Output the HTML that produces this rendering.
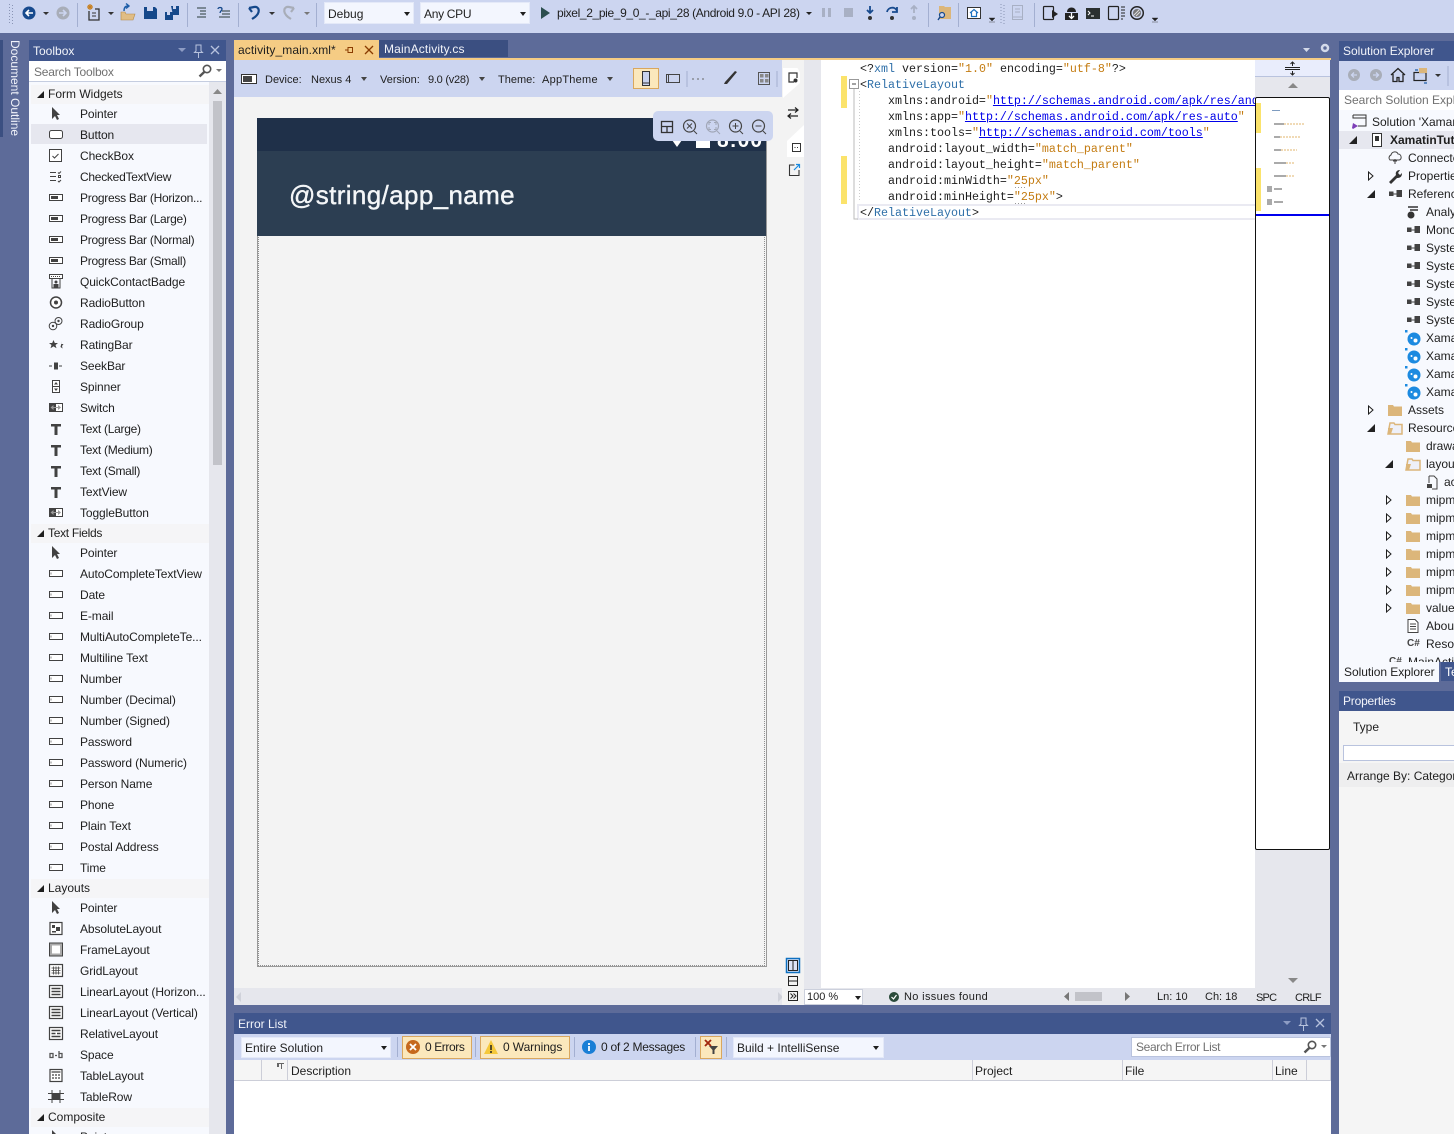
<!DOCTYPE html>
<html><head><meta charset="utf-8"><style>
html,body{margin:0;padding:0}
body{width:1454px;height:1134px;overflow:hidden;position:relative;background:#5d6b99;font:12px/16px "Liberation Sans",sans-serif;color:#1e1e1e}
div,span.a,svg.a{position:absolute}
.a{white-space:nowrap}
.w{color:#fff}
.tb{left:0;top:0;width:1454px;height:33px;background:#ccd5f0}
.sp{width:1px;height:24px;top:3px;background:#a3afd1}
.cb{background:#f3f6fe;border:1px solid #e4e9f8;height:22px;top:2px;line-height:22px;padding-left:3px;box-sizing:border-box}
.dd{width:0;height:0;border:3px solid transparent;border-top:4px solid #1e1e1e;border-bottom:0}
.hd{background:#40568d;color:#f2f4fa}
.x{position:relative;height:21px;line-height:21px;white-space:nowrap;padding-left:80px;margin-left:-29px;letter-spacing:-.1px}
.n2{letter-spacing:-.27px}
.c{position:relative;height:19px;line-height:19px;white-space:nowrap;padding-left:17px;background:#f5f5f7;margin:0 2px}
.c:before{content:"";position:absolute;left:6px;top:6px;width:0;height:0;border-left:7px solid transparent;border-bottom:7px solid #1e1e1e}
.x svg{position:absolute;left:48px;top:2px;width:16px;height:16px}
.t{left:1339px;width:115px;height:18px;line-height:18px;white-space:nowrap;overflow:hidden}
.t span{position:absolute;top:0}
.t svg{position:absolute;top:1px;width:16px;height:16px}
.code{font:11.67px/16px "Liberation Mono",monospace;white-space:pre;left:860px;color:#1e1e1e}
.s{color:#c47c12}.n{color:#2e6fa8}.l{color:#0000e8;text-decoration:underline}
.btn{background:#fbe8bc;border:1px solid #d9a75e;box-sizing:border-box;height:23px;top:1036px}
</style></head><body>
<svg width="0" height="0" style="position:absolute">
<symbol id="ptr" viewBox="0 0 16 16"><path d="M4 1v12l3-3 2 4 2-1-2-4h3z" fill="#424242"/></symbol>
<symbol id="btn" viewBox="0 0 16 16"><rect x="1.500" y="3.500" width="13" height="8" rx="2" fill="#fff" stroke="#424242"/></symbol>
<symbol id="chk" viewBox="0 0 16 16"><rect x="1.500" y="1.500" width="12" height="12" fill="#fff" stroke="#424242"/><path d="M4.500 8l2 2 4-4" fill="none" stroke="#424242"/></symbol>
<symbol id="ctv" viewBox="0 0 16 16"><path d="M2 3.500h6M2 7.500h6M2 11.500h6M10 3.500l1 1 2-2M10 12l1 1 2-2" fill="none" stroke="#424242"/><rect x="10.500" y="6.500" width="2" height="2" fill="none" stroke="#424242"/></symbol>
<symbol id="pb" viewBox="0 0 16 16"><rect x="1.500" y="4.500" width="13" height="6" fill="#fff" stroke="#424242"/><rect x="3" y="6" width="7" height="3" fill="#424242"/></symbol>
<symbol id="tf" viewBox="0 0 16 16"><rect x="1.500" y="4.500" width="13" height="6" fill="#fff" stroke="#424242"/><path d="M3 6.500v2" stroke="#888"/></symbol>
<symbol id="qcb" viewBox="0 0 16 16"><rect x="1.500" y="0.500" width="13" height="4" fill="#fff" stroke="#424242"/><path d="M3 2.500h1M5 2.500h1M7 2.500h1M9 2.500h1M11 2.500h1" stroke="#424242"/><path d="M4 5v9h8V5" fill="none" stroke="#424242"/><circle cx="8" cy="8" r="1.500" fill="#424242"/><rect x="5.500" y="10" width="5" height="3.500" fill="#424242"/></symbol>
<symbol id="rad" viewBox="0 0 16 16"><circle cx="8" cy="7.500" r="5.500" fill="#fff" stroke="#424242" stroke-width="1.500"/><circle cx="8" cy="7.500" r="2" fill="#424242"/></symbol>
<symbol id="rg" viewBox="0 0 16 16"><circle cx="10.500" cy="5" r="3.500" fill="none" stroke="#424242"/><circle cx="5" cy="10" r="3.800" fill="#f7f9fe" stroke="#424242"/><circle cx="5" cy="10" r="1.200" fill="#424242"/><circle cx="10.500" cy="5" r="1.200" fill="#424242"/></symbol>
<symbol id="rt" viewBox="0 0 16 16"><path d="M5.500 3l1.300 3H10L7.500 8l1 3.200L5.500 9.400 2.500 11.200 3.500 8 1 6h3.200zM14 4l-.6 3H15.500l-1.500 2 .6 2.500L12.500 10z" fill="#424242"/></symbol>
<symbol id="sk" viewBox="0 0 16 16"><path d="M1 8h3M11 8h3" stroke="#424242"/><rect x="6" y="4.500" width="4" height="7" fill="#424242"/></symbol>
<symbol id="spn" viewBox="0 0 16 16"><rect x="4.500" y="1.500" width="7" height="12" fill="#fff" stroke="#424242"/><path d="M4.500 7.500h7" stroke="#424242"/><path d="M8 3l2 2.500H6zM6 9.500h4L8 12z" fill="#424242"/></symbol>
<symbol id="sw" viewBox="0 0 16 16"><rect x="1" y="3" width="14" height="9" fill="#424242"/><rect x="8" y="4" width="6" height="7" fill="#fff"/><path d="M2.500 7.500L5.500 5v5zM13 7.500L10 5v5z" fill="#9a9a9a"/><path d="M5 7.500h6" stroke="#999"/></symbol>
<symbol id="T" viewBox="0 0 16 16"><path d="M3 3h10v2.500H9.500V14h-3V5.500H3z" fill="#424242"/></symbol>
<symbol id="abs" viewBox="0 0 16 16"><rect x="2" y="1.500" width="12" height="12" fill="#fff" stroke="#424242" stroke-width="1.200"/><rect x="4" y="4" width="3" height="3" fill="#424242"/><rect x="8" y="6" width="4" height="4" fill="#424242"/><rect x="4" y="10" width="4" height="1.500" fill="#424242"/></symbol>
<symbol id="fr" viewBox="0 0 16 16"><rect x="1.500" y="1" width="13" height="13" fill="#aaa" stroke="#424242"/><rect x="4" y="3.500" width="8" height="8" fill="#fff"/></symbol>
<symbol id="gr" viewBox="0 0 16 16"><rect x="1.500" y="1.500" width="13" height="12" fill="#fff" stroke="#424242" stroke-width="1.200"/><path d="M3.500 5h9M3.500 7.500h9M3.500 10h9M5.500 3.500v8M8 3.500v8M10.500 3.500v8" stroke="#424242" stroke-width=".8"/></symbol>
<symbol id="lin" viewBox="0 0 16 16"><rect x="1.500" y="1.500" width="13" height="12" fill="#fff" stroke="#424242" stroke-width="1.200"/><path d="M3.500 4.500h9M3.500 7.500h9M3.500 10.500h9" stroke="#424242" stroke-width="1.500"/></symbol>
<symbol id="rel" viewBox="0 0 16 16"><rect x="1.500" y="1.500" width="13" height="12" fill="#fff" stroke="#424242" stroke-width="1.200"/><path d="M3.500 4.500h9M3.500 7.500h4M9 7.500h3.500M3.500 10.500h9" stroke="#424242" stroke-width="1.500"/></symbol>
<symbol id="sp" viewBox="0 0 16 16"><path d="M2 6.500h3v4H2zM11 4v6.500h3v-4h-3M7 8.500h2" fill="none" stroke="#555" stroke-width="1.300"/></symbol>
<symbol id="tbl" viewBox="0 0 16 16"><rect x="2" y="1.500" width="12" height="12" fill="#fff" stroke="#424242" stroke-width="1.200"/><path d="M3.500 4h9M4 7h2M7 7h2M10 7h2M4 10h2M7 10h2M10 10h2" stroke="#424242" stroke-width="1.300"/></symbol>
<symbol id="tr" viewBox="0 0 16 16"><path d="M0 4.500h16M0 10.500h16M4 1v13M12 1v13" stroke="#424242"/><rect x="4" y="5" width="8" height="5" fill="#424242"/></symbol>
<symbol id="fld" viewBox="0 0 16 16"><path d="M1 3h5l1 1.500h8V14H1z" fill="#dcb67a"/></symbol>
<symbol id="fo" viewBox="0 0 16 16"><path d="M3 3h4l1 1.500h7V14H1z" fill="#eef0f8" stroke="#dcb67a" stroke-width="1.500"/><path d="M1 8h5l-2 6H1z" fill="#dcb67a"/></symbol>
<symbol id="refs" viewBox="0 0 16 16"><rect x="2" y="5.500" width="4.500" height="4.500" fill="#424242"/><rect x="9.500" y="4" width="5.500" height="7" fill="#424242"/><path d="M6.500 8h3" stroke="#424242"/></symbol>
<symbol id="xam" viewBox="0 0 16 16"><circle cx="9" cy="9" r="6.500" fill="#1c8ae0"/><circle cx="10.500" cy="10.500" r="2" fill="#fff"/><circle cx="6.500" cy="8" r="1" fill="#fff"/><rect x="0" y="0" width="2.500" height="2.500" fill="#1c8ae0"/></symbol>
<symbol id="arO" viewBox="0 0 8 10"><path d="M1.500 1v8l4.500-4z" fill="#fff" stroke="#1e1e1e"/></symbol>
<symbol id="mag" viewBox="0 0 16 16"><circle cx="10" cy="6" r="3.700" fill="none" stroke="#555" stroke-width="1.600"/><path d="M7.500 8.700L2.500 13.500" stroke="#555" stroke-width="2.400"/></symbol>
</svg>

<div class="tb"></div>
<svg class="a" style="left:0;top:0" width="330" height="33" viewBox="0 0 330 33">
<path d="M9.500 4v20M12.500 5v20" stroke="#8a95b5" stroke-dasharray="1 2"/>
<circle cx="29" cy="13" r="6.500" fill="#174a8e"/><path d="M33 13h-7M29 10l-3 3 3 3" stroke="#fff" stroke-width="1.600" fill="none"/>
<path d="M43 12h6l-3 3zM108 12h6l-3 3z" fill="#333"/>
<circle cx="63" cy="13" r="6.500" fill="#a8adb8"/><path d="M59 13h7M63 10l3 3-3 3" stroke="#ccd5f0" stroke-width="1.600" fill="none"/>
<rect x="77" y="3" width="1" height="24" fill="#a3afd1"/>
<path d="M89 11V20h10V9h-4" fill="none" stroke="#333" stroke-width="1.300"/><path d="M92 13h4M92 16h4" stroke="#333"/><path d="M87 7h6M90 4v6M88 5l4 4M92 5l-4 4" stroke="#c77f1e" stroke-width="1.200"/>
<path d="M121 12h4l1 2h9l-2 6h-12z" fill="#e0bd85" stroke="#b58a46" stroke-width=".6"/><path d="M124 11c0-4 2-5 4-5M126 3.500l3 2.500-3 2.500" fill="none" stroke="#1e5ea8" stroke-width="1.400"/>
<path d="M144 7h11l2 2v10h-13z" fill="#15488a"/><rect x="147" y="7" width="6" height="4" fill="#ccd5f0"/>
<path d="M165 12h8v8h-8z" fill="#15488a"/><path d="M171 6h8v9h-6z" fill="#15488a"/><rect x="173" y="6" width="3" height="3" fill="#ccd5f0"/><rect x="167" y="12" width="3" height="3" fill="#ccd5f0"/>
<rect x="187" y="3" width="1" height="24" fill="#a3afd1"/>
<path d="M197 8h9M200 11h6M200 14h6M197 17h9" stroke="#2a3a3a" stroke-width="1.100"/>
<path d="M222 11h8M222 14h8M219 17h11" stroke="#2a3a3a" stroke-width="1.100"/><path d="M218 9c0-2 4-2 4 0s-2 2-2 4" fill="none" stroke="#15488a" stroke-width="1.300"/>
<rect x="238" y="3" width="1" height="24" fill="#a3afd1"/>
<path d="M249 8l3 4M249 8l5-1c5-1 7 5 1 10l-3 2" fill="none" stroke="#15488a" stroke-width="2.200"/>
<path d="M269 12h6l-3 3z" fill="#333"/>
<path d="M294 8l-3 4M294 8l-5-1c-5-1-7 5-1 10l3 2" fill="none" stroke="#a8adb8" stroke-width="2.200"/>
<path d="M304 12h6l-3 3z" fill="#777"/>
<rect x="316" y="3" width="1" height="24" fill="#a3afd1"/>
</svg>
<div class="cb" style="left:324px;width:90px">Debug</div><div class="dd" style="left:404px;top:12px"></div>
<div class="cb" style="left:420px;width:110px;letter-spacing:-.3px">Any CPU</div><div class="dd" style="left:520px;top:12px"></div>
<svg class="a" style="left:536px;top:0" width="18" height="26"><path d="M5 7l9 6-9 6z" fill="#2c4f4f"/></svg>
<span class="a" style="left:557px;top:5px;letter-spacing:-.36px">pixel_2_pie_9_0_-_api_28 (Android 9.0 - API 28)</span>
<svg class="a" style="left:800px;top:0" width="370" height="33" viewBox="800 0 370 33">
<path d="M806 12h6l-3 3z" fill="#222"/>
<path d="M822 8h3v9h-3zM828 8h3v9h-3z" fill="#a8b0c4"/><rect x="844" y="8" width="9" height="9" fill="#a8b0c4"/>
<path d="M870 6v6M867 10l3 3 3-3" stroke="#174a8e" stroke-width="1.800" fill="none"/><circle cx="870" cy="18" r="2" fill="#333"/>
<path d="M887 12c1-5 8-6 10-1M897 7v5h-5" stroke="#174a8e" stroke-width="1.800" fill="none"/><circle cx="892" cy="18" r="2" fill="#333"/>
<path d="M914 13V7M911 9l3-3 3 3" stroke="#a8b0c4" stroke-width="1.800" fill="none"/><circle cx="914" cy="18" r="2" fill="#a8b0c4"/>
<rect x="928" y="3" width="1" height="24" fill="#a3afd1"/>
<path d="M939 6h5l1 1h6v12h-12z" fill="#dcb67a"/><circle cx="942" cy="15" r="2.500" fill="#ccd5f0" stroke="#174a8e" stroke-width="1.200"/><path d="M940 17l-2 3" stroke="#174a8e" stroke-width="1.400"/>
<rect x="958" y="3" width="1" height="24" fill="#a3afd1"/>
<rect x="967.500" y="7.500" width="13" height="11" fill="#fff" stroke="#333"/><path d="M970 13l4-3.500 4 3.500M971.500 12.500v4h5v-4" fill="none" stroke="#1a70c0" stroke-width="1.200"/>
<path d="M989 18h6l-3 3zM989 22h6" fill="#222" stroke="#222" stroke-width=".4"/>
<path d="M1001 4v20M1004 5v20" stroke="#8a95b5" stroke-dasharray="1 2"/>
<rect x="1012.500" y="5.500" width="10" height="14" fill="none" stroke="#a8b0c4"/><path d="M1012 17h11M1015 9h5M1015 12h5" stroke="#a8b0c4"/>
<rect x="1034" y="3" width="1" height="24" fill="#a3afd1"/>
<rect x="1043.500" y="6.500" width="10" height="13" rx="1" fill="none" stroke="#222" stroke-width="1.200"/><path d="M1052 10l6 4-6 4z" fill="#222"/>
<path d="M1065 13h13v7h-13z" fill="#222"/><path d="M1067 12c0-6 9-6 9 0z" fill="#222"/><path d="M1071.500 13v5M1069 16l2.500 2.500 2.500-2.500" stroke="#fff" fill="none" stroke-width="1.300"/>
<rect x="1086" y="8" width="14" height="11" fill="#2a3030"/><path d="M1088 11l2 2-2 2M1091 16h3" stroke="#fff" fill="none"/>
<rect x="1108.500" y="6.500" width="10" height="13" rx="1" fill="none" stroke="#222" stroke-width="1.200"/><path d="M1121 7h4M1121 10h4M1121 13h4M1121 16h4M1121 19h2" stroke="#222"/>
<circle cx="1137" cy="13" r="6.300" fill="none" stroke="#222" stroke-width="1.500"/><circle cx="1137" cy="13" r="4" fill="#777"/><path d="M1134 15l5-5M1136 16l4-4" stroke="#ddd"/>
<path d="M1152 18h6l-3 3zM1152 22h6" fill="#222" stroke="#222" stroke-width=".4"/>
</svg>

<!-- Document outline -->
<div style="left:0;top:40px;width:3px;height:97px;background:#3b4f81"></div>
<span class="a w" style="left:7px;top:40px;writing-mode:vertical-rl;color:#f0f2fa">Document Outline</span>

<!-- Toolbox -->
<div class="hd" style="left:29px;top:40px;width:197px;height:21px"></div>
<span class="a" style="left:33px;top:43px;color:#f2f4fa">Toolbox</span>
<svg class="a" style="left:175px;top:42px" width="48" height="18"><path d="M3 6h8l-4 4z" fill="#8d9cc4"/><path d="M21 3h5v6l1.500 1.500h-8L21 9zM23.500 11v5" fill="none" stroke="#b7c2dd"/><path d="M36 4l8 8M44 4l-8 8" stroke="#b7c2dd" stroke-width="1.300"/></svg>
<div style="left:29px;top:61px;width:197px;height:21px;background:#fff;border-bottom:1px solid #c5cde0;box-sizing:border-box"></div>
<span class="a" style="left:34px;top:64px;color:#717171;letter-spacing:-.2px">Search Toolbox</span>
<svg class="a" style="left:197px;top:63px" width="16" height="16"><use href="#mag"/></svg>
<svg class="a" style="left:215px;top:69px" width="8" height="5"><path d="M1 0h6L4 3z" fill="#777"/></svg>
<div style="left:29px;top:82px;width:180px;height:1052px;background:#f7f9fe;overflow:hidden">
<div style="left:-29px;top:3px;width:238px;padding-left:29px;box-sizing:border-box">
<div style="position:static">
<div class="c">Form Widgets</div>
<div class="x"><svg><use href="#ptr"/></svg>Pointer</div>
<div class="x"><div style="left:31px;top:-1px;width:176px;height:20px;background:#e6e7ef"></div><svg><use href="#btn"/></svg><span style="position:relative">Button</span></div>
<div class="x"><svg><use href="#chk"/></svg>CheckBox</div>
<div class="x"><svg><use href="#ctv"/></svg><span class="n2">CheckedTextView</span></div>
<div class="x"><svg><use href="#pb"/></svg><span class="n2">Progress Bar (Horizon...</span></div>
<div class="x"><svg><use href="#pb"/></svg><span class="n2">Progress Bar (Large)</span></div>
<div class="x"><svg><use href="#pb"/></svg><span class="n2">Progress Bar (Normal)</span></div>
<div class="x"><svg><use href="#pb"/></svg><span class="n2">Progress Bar (Small)</span></div>
<div class="x"><svg><use href="#qcb"/></svg>QuickContactBadge</div>
<div class="x"><svg><use href="#rad"/></svg>RadioButton</div>
<div class="x"><svg><use href="#rg"/></svg>RadioGroup</div>
<div class="x"><svg><use href="#rt"/></svg>RatingBar</div>
<div class="x"><svg><use href="#sk"/></svg>SeekBar</div>
<div class="x"><svg><use href="#spn"/></svg>Spinner</div>
<div class="x"><svg><use href="#sw"/></svg>Switch</div>
<div class="x"><svg><use href="#T"/></svg><span class="n2">Text (Large)</span></div>
<div class="x"><svg><use href="#T"/></svg><span class="n2">Text (Medium)</span></div>
<div class="x"><svg><use href="#T"/></svg><span class="n2">Text (Small)</span></div>
<div class="x"><svg><use href="#T"/></svg>TextView</div>
<div class="x"><svg><use href="#sw"/></svg>ToggleButton</div>
<div class="c" style="letter-spacing:-.3px">Text Fields</div>
<div class="x"><svg><use href="#ptr"/></svg>Pointer</div>
<div class="x"><svg><use href="#tf"/></svg>AutoCompleteTextView</div>
<div class="x"><svg><use href="#tf"/></svg>Date</div>
<div class="x"><svg><use href="#tf"/></svg>E-mail</div>
<div class="x"><svg><use href="#tf"/></svg>MultiAutoCompleteTe...</div>
<div class="x"><svg><use href="#tf"/></svg>Multiline Text</div>
<div class="x"><svg><use href="#tf"/></svg>Number</div>
<div class="x"><svg><use href="#tf"/></svg>Number (Decimal)</div>
<div class="x"><svg><use href="#tf"/></svg>Number (Signed)</div>
<div class="x"><svg><use href="#tf"/></svg>Password</div>
<div class="x"><svg><use href="#tf"/></svg>Password (Numeric)</div>
<div class="x"><svg><use href="#tf"/></svg>Person Name</div>
<div class="x"><svg><use href="#tf"/></svg>Phone</div>
<div class="x"><svg><use href="#tf"/></svg>Plain Text</div>
<div class="x"><svg><use href="#tf"/></svg>Postal Address</div>
<div class="x"><svg><use href="#tf"/></svg>Time</div>
<div class="c">Layouts</div>
<div class="x"><svg><use href="#ptr"/></svg>Pointer</div>
<div class="x"><svg><use href="#abs"/></svg>AbsoluteLayout</div>
<div class="x"><svg><use href="#fr"/></svg>FrameLayout</div>
<div class="x"><svg><use href="#gr"/></svg>GridLayout</div>
<div class="x"><svg><use href="#lin"/></svg>LinearLayout (Horizon...</div>
<div class="x"><svg><use href="#lin"/></svg>LinearLayout (Vertical)</div>
<div class="x"><svg><use href="#rel"/></svg>RelativeLayout</div>
<div class="x"><svg><use href="#sp"/></svg>Space</div>
<div class="x"><svg><use href="#tbl"/></svg>TableLayout</div>
<div class="x"><svg><use href="#tr"/></svg>TableRow</div>
<div class="c">Composite</div>
<div class="x"><svg><use href="#ptr"/></svg>Pointer</div>
</div></div></div>
<div style="left:209px;top:82px;width:17px;height:1052px;background:#e6e7ed"></div>
<div style="left:213px;top:101px;width:9px;height:364px;background:#c2c3c9"></div>
<svg class="a" style="left:212px;top:88px" width="11" height="8"><path d="M1 6h9L5.500 1z" fill="#888"/></svg>

<!-- Editor tabs -->
<div style="left:234px;top:40px;width:145px;height:20px;background:#f5cc84"></div>
<span class="a" style="left:238px;top:42px;letter-spacing:.1px">activity_main.xml*</span>
<svg class="a" style="left:344px;top:44px" width="32" height="12"><path d="M1 6h3M4 3.500v5h4.500v-5z" stroke="#8a3b00" fill="none"/><path d="M21 2l8 8M29 2l-8 8" stroke="#8a3b00" stroke-width="1.300"/></svg>
<div style="left:379px;top:40px;width:129px;height:17px;background:#3b4f81"></div>
<span class="a" style="left:384px;top:41px;color:#f2f4fa;letter-spacing:.15px">MainActivity.cs</span>
<div style="left:234px;top:58px;width:1097px;height:2px;background:#f5cc84"></div>
<svg class="a" style="left:1300px;top:42px" width="32" height="14"><path d="M3 6h7l-3.500 4z" fill="#d4daea"/><circle cx="25" cy="6" r="3" fill="none" stroke="#d4daea" stroke-width="2.500"/></svg>

<!-- Designer -->
<div style="left:234px;top:60px;width:548px;height:37px;background:#ccd5f0"></div>
<div style="left:234px;top:97px;width:548px;height:891px;background:#f3f3f3"></div>
<svg class="a" style="left:241px;top:72px" width="18" height="14"><rect x=".5" y="2.500" width="15" height="9" fill="#fff" stroke="#333"/><rect x="2" y="4" width="9" height="6" fill="#444"/></svg>
<span class="a" style="left:265px;top:72px;font-size:11px">Device:</span><span class="a" style="left:311px;top:72px;font-size:11px">Nexus 4</span>
<div class="dd" style="left:361px;top:77px;border-top-color:#444"></div>
<span class="a" style="left:380px;top:72px;font-size:11px">Version:</span><span class="a" style="left:428px;top:72px;font-size:11px;letter-spacing:-.25px">9.0 (v28)</span>
<div class="dd" style="left:479px;top:77px;border-top-color:#444"></div>
<span class="a" style="left:498px;top:72px;font-size:11px">Theme:</span><span class="a" style="left:542px;top:72px;font-size:11px;letter-spacing:.25px">AppTheme</span>
<div class="dd" style="left:607px;top:77px;border-top-color:#444"></div>
<div style="left:633px;top:68px;width:26px;height:21px;background:#fbe8bc;border:1px solid #d9a75e;box-sizing:border-box"></div>
<svg class="a" style="left:640px;top:70px" width="140" height="18" viewBox="640 70 140 18"><rect x="642.500" y="71.500" width="7" height="14" fill="#c8d2ee" stroke="#333"/><path d="M642 83h8" stroke="#333"/><rect x="666.500" y="74.500" width="13" height="8" fill="none" stroke="#444"/><path d="M668.500 75v7" stroke="#444"/><path d="M687 71v16" stroke="#a3afd1"/><path d="M692 79h2M697 79h2M702 79h2" stroke="#666"/><path d="M724 84l1-2 10-11 2 1-10 12z" fill="#333"/><rect x="758.500" y="72.500" width="11" height="12" fill="none" stroke="#555"/><rect x="760" y="74" width="3.500" height="3.500" fill="#888"/><rect x="765" y="74" width="3.500" height="3.500" fill="#888"/><rect x="760" y="79" width="3.500" height="3.500" fill="#888"/><rect x="765" y="79" width="3.500" height="3.500" fill="#888"/><path d="M777 71v16" stroke="#a3afd1"/></svg>

<!-- Phone -->
<div style="left:257px;top:118px;width:510px;height:849px;background:#f3f3f3;border:1px solid #999;border-top:0;box-sizing:border-box"></div>
<div style="left:257px;top:118px;width:509px;height:33px;background:#1f3049;overflow:hidden">
<span class="a" style="left:460px;top:12px;font-size:21px;line-height:22px;font-weight:bold;color:#fff;letter-spacing:1px">8:00</span>
<div style="left:439px;top:22px;width:14px;height:8px;background:#fff"></div>
<svg class="a" style="left:414px;top:22px" width="12" height="8"><path d="M1 0h10L6 7z" fill="#fff"/></svg>
</div>
<div style="left:257px;top:151px;width:509px;height:85px;background:#2c3e52"></div>
<span class="a" style="left:289px;top:178px;font-size:26px;line-height:34px;color:#f4f6f8;letter-spacing:.37px;-webkit-text-stroke:.4px #f4f6f8">@string/app_name</span>
<div style="left:258px;top:237px;width:507px;height:729px;border:1px dotted #8f8f8f;box-sizing:border-box;border-top:0"></div>
<div style="left:653px;top:111px;width:120px;height:30px;background:#ccd5f0;border-radius:5px"></div>
<svg class="a" style="left:653px;top:111px" width="120" height="30" viewBox="653 111 120 30">
<rect x="661.500" y="121.500" width="11" height="11" fill="none" stroke="#333" stroke-width="1.300"/><path d="M661 126.500h12M667 126.500v6" stroke="#333" stroke-width="1.300"/>
<circle cx="689.500" cy="126" r="6" fill="none" stroke="#444" stroke-width="1.200"/><path d="M694 131l3 3M687 123.500l5 5M692 123.500l-5 5" stroke="#444"/>
<circle cx="712.500" cy="126" r="6" fill="none" stroke="#a0a6b6" stroke-width="1.200"/><path d="M717 131l3 3M709 125v-2.500h2M716 125v-2.500h-2M709 127v2.500h2M716 127v2.500h-2" stroke="#a0a6b6" fill="none"/>
<circle cx="735.500" cy="126" r="6" fill="none" stroke="#444" stroke-width="1.200"/><path d="M740 131l3 3M732.500 126h6M735.500 123v6" stroke="#444"/>
<circle cx="758.500" cy="126" r="6" fill="none" stroke="#444" stroke-width="1.200"/><path d="M763 131l3 3M755.500 126h6" stroke="#444"/>
</svg>
<div style="left:234px;top:988px;width:548px;height:17px;background:#e6e7ed"></div>
<svg class="a" style="left:234px;top:990px" width="552" height="14"><path d="M7 2v10l-5-5zM544 2v10l5-5z" fill="#d0d2da"/></svg>

<!-- side strip -->
<div style="left:782px;top:60px;width:22px;height:945px;background:#f3f3f3"></div>
<div style="left:804px;top:60px;width:17px;height:945px;background:#e6e7ed"></div>
<div style="left:783px;top:68px;width:17px;height:30px;background:#fff;clip-path:polygon(0 0,85% 0,100% 15%,100% 50%,0 100%)"></div>
<div style="left:787px;top:125px;width:17px;height:32px;background:#fff;clip-path:polygon(100% 0,100% 100%,0 100%,0 50%)"></div>
<svg class="a" style="left:784px;top:66px" width="22" height="115" viewBox="784 66 22 115">
<path d="M797 78v-5h-8v9h5" fill="none" stroke="#333" stroke-width="1.200"/><circle cx="795.500" cy="80.500" r="2" fill="#333"/>
<path d="M788 110h10M795 107.500l3 2.500-3 2.500M798 116h-10M791 113.500l-3 2.500 3 2.500" fill="none" stroke="#222" stroke-width="1.200"/>
<rect x="792.500" y="143.500" width="8" height="8" fill="#fff" stroke="#333"/><path d="M794.500 147.500h1M797 147.500h1" stroke="#333"/>
<path d="M799 170v5.500h-9.500V165h5" fill="none" stroke="#333" stroke-width="1.100"/><path d="M794 170l5-5M796 164.500h3.500v3.500" fill="none" stroke="#1a8ae0" stroke-width="1.200"/>
</svg>
<svg class="a" style="left:785px;top:957px" width="18" height="47" viewBox="785 957 18 47">
<rect x="786.500" y="958.500" width="13" height="14" fill="#dbe3f7" stroke="#0e70c0" stroke-width="1.500"/><rect x="788.500" y="960.500" width="9" height="10" fill="none" stroke="#222"/><path d="M793 961v9" stroke="#222"/>
<rect x="788.500" y="976.500" width="9" height="9" fill="none" stroke="#222"/><path d="M789 981h8" stroke="#222"/>
<rect x="788.500" y="991.500" width="9" height="9" fill="none" stroke="#222"/><path d="M790.500 993.500l2.500 2.500-2.500 2.500M793.500 993.500l2.500 2.500-2.500 2.500" fill="none" stroke="#222"/>
</svg>

<!-- Code -->
<div style="left:821px;top:60px;width:434px;height:928px;background:#fff"></div>
<div style="left:841px;top:76px;width:6px;height:32px;background:#fbe36b"></div>
<div style="left:841px;top:156px;width:6px;height:48px;background:#fbe36b"></div>
<div style="left:857px;top:204px;width:398px;height:16px;border:2px solid #eaeaf2;border-right:0;box-sizing:border-box"></div>
<svg class="a" style="left:849px;top:79px" width="14" height="142"><rect x=".5" y=".5" width="9" height="9" fill="#fff" stroke="#999"/><path d="M3 5h4" stroke="#444"/><path d="M5 10v130h4" stroke="#bbb" fill="none"/><path d="M10.500 12v110" stroke="#ccc" stroke-dasharray="1 2"/></svg>
<span class="a code" style="top:61px">&lt;?<span class="n">xml</span> version=<span class="s">"1.0"</span> encoding=<span class="s">"utf-8"</span>?&gt;</span>
<span class="a code" style="top:77px">&lt;<span class="n">RelativeLayout</span></span>
<div style="left:888px;top:93px;width:367px;height:16px;overflow:hidden"><span class="a code" style="left:0;top:0">xmlns:android=<span class="s">"</span><span class="l">http://schemas.android.com/apk/res/android</span><span class="s">"</span></span></div>
<span class="a code" style="left:888px;top:109px">xmlns:app=<span class="s">"</span><span class="l">http://schemas.android.com/apk/res-auto</span><span class="s">"</span></span>
<span class="a code" style="left:888px;top:125px">xmlns:tools=<span class="s">"</span><span class="l">http://schemas.android.com/tools</span><span class="s">"</span></span>
<span class="a code" style="left:888px;top:141px">android:layout_width=<span class="s">"match_parent"</span></span>
<span class="a code" style="left:888px;top:157px">android:layout_height=<span class="s">"match_parent"</span></span>
<span class="a code" style="left:888px;top:173px">android:minWidth=<span class="s">"25px"</span></span>
<span class="a code" style="left:888px;top:189px">android:minHeight=<span class="s">"25px"</span>&gt;</span>
<span class="a code" style="top:205px">&lt;/<span class="n">RelativeLayout</span>&gt;</span>
<svg class="a" style="left:1014px;top:185px" width="14" height="20"><path d="M1 2.500h10M1 18.500h10" stroke="#999" stroke-dasharray="1 2"/></svg>

<!-- Minimap -->
<div style="left:1255px;top:60px;width:75px;height:945px;background:#e6e7ed"></div>
<div style="left:1255px;top:60px;width:75px;height:17px;background:#e9edfc;border-bottom:1px solid #b9c3de;box-sizing:border-box"></div>
<svg class="a" style="left:1285px;top:61px" width="16" height="15"><path d="M0 6.500h15M0 8.500h15M7.500 1v4M5.500 3l2-2 2 2M7.500 10v4M5.500 12l2 2 2-2" fill="none" stroke="#222"/></svg>
<svg class="a" style="left:1287px;top:82px" width="12" height="7"><path d="M1 6h10L6 1z" fill="#888"/></svg>
<svg class="a" style="left:1287px;top:977px" width="12" height="7"><path d="M1 1h10L6 6z" fill="#888"/></svg>
<div style="left:1255px;top:97px;width:75px;height:753px;background:#fff;border:1px solid #111;border-radius:2px;box-sizing:border-box"></div>
<svg class="a" style="left:1256px;top:98px" width="73" height="120" viewBox="1256 98 73 120">
<rect x="1256" y="103" width="5" height="30" fill="#fbe36b"/><rect x="1256" y="168" width="5" height="43" fill="#fbe36b"/>
<path d="M1272 110.500h8" stroke="#7e9cc0"/>
<path d="M1274 124h10" stroke="#555"/><path d="M1284 124h20" stroke="#e2b56e" stroke-dasharray="2 1"/>
<path d="M1274 137h6" stroke="#555"/><path d="M1280 137h21" stroke="#e2b56e" stroke-dasharray="2 1"/>
<path d="M1274 150h7" stroke="#555"/><path d="M1281 150h16" stroke="#e2b56e" stroke-dasharray="2 1"/>
<path d="M1274 163h12" stroke="#555"/><path d="M1286 163h8" stroke="#e2b56e" stroke-dasharray="2 1"/>
<path d="M1274 176h12" stroke="#555"/><path d="M1286 176h9" stroke="#e2b56e" stroke-dasharray="2 1"/>
<rect x="1267" y="186" width="5" height="6" fill="#aaa"/><path d="M1274 189h8" stroke="#555"/>
<rect x="1267" y="199" width="5" height="6" fill="#aaa"/><path d="M1274 202h9" stroke="#555"/>
<rect x="1256" y="214" width="73" height="2" fill="#0000ee"/>
</svg>

<!-- status -->
<div style="left:806px;top:988px;width:524px;height:17px;background:#e6e7ed"></div>
<div style="left:804px;top:989px;width:59px;height:16px;background:#fff;border:1px solid #ccd0dc;box-sizing:border-box;font-size:11px;line-height:14px;padding-left:2px">100 %</div>
<div class="dd" style="left:855px;top:996px"></div>
<svg class="a" style="left:888px;top:991px" width="12" height="12"><circle cx="6" cy="6" r="5" fill="#2a4a3a"/><path d="M3.500 6l2 2 3-4" stroke="#fff" fill="none" stroke-width="1.200"/></svg>
<span class="a" style="left:904px;top:989px;font-size:11px;letter-spacing:.35px">No issues found</span>
<svg class="a" style="left:1062px;top:990px" width="70" height="14"><path d="M7 2v9L2 6.500zM63 2v9l5-4.500z" fill="#777"/><rect x="13" y="2" width="27" height="9" fill="#c2c3c9"/></svg>
<span class="a" style="left:1157px;top:989px;font-size:11px">Ln: 10</span>
<span class="a" style="left:1205px;top:989px;font-size:11px">Ch: 18</span>
<span class="a" style="left:1256px;top:990px;font-size:11px;letter-spacing:-.8px">SPC</span>
<span class="a" style="left:1295px;top:990px;font-size:11px;letter-spacing:-.7px">CRLF</span>

<!-- Error List -->
<div class="hd" style="left:234px;top:1013px;width:1097px;height:21px"></div>
<span class="a" style="left:238px;top:1016px;color:#f2f4fa">Error List</span>
<svg class="a" style="left:1280px;top:1015px" width="48" height="18"><path d="M3 6h8l-4 4z" fill="#8d9cc4"/><path d="M21 3h5v6l1.500 1.500h-8L21 9zM23.500 11v5" fill="none" stroke="#b7c2dd"/><path d="M36 4l8 8M44 4l-8 8" stroke="#b7c2dd" stroke-width="1.300"/></svg>
<div style="left:234px;top:1034px;width:1097px;height:26px;background:#ccd5f0"></div>
<div class="cb" style="left:241px;top:1037px;width:150px;height:21px;line-height:20px">Entire Solution</div><div class="dd" style="left:381px;top:1046px"></div>
<div class="sp" style="left:397px;top:1037px;height:20px"></div>
<div class="btn" style="left:402px;width:70px"></div>
<svg class="a" style="left:405px;top:1039px" width="16" height="16"><circle cx="8" cy="8" r="7" fill="#c6691d"/><path d="M5 5l6 6M11 5l-6 6" stroke="#fff" stroke-width="1.800"/></svg>
<span class="a" style="left:425px;top:1039px;letter-spacing:-.4px">0 Errors</span>
<div class="sp" style="left:475px;top:1037px;height:20px"></div>
<div class="btn" style="left:480px;width:90px"></div>
<svg class="a" style="left:483px;top:1039px" width="16" height="16"><path d="M8 1l7 14H1z" fill="#f5c83a"/><path d="M8 6v5M8 12v2" stroke="#222" stroke-width="1.500"/></svg>
<span class="a" style="left:503px;top:1039px;letter-spacing:-.1px">0 Warnings</span>
<div class="sp" style="left:574px;top:1037px;height:20px"></div>
<svg class="a" style="left:581px;top:1039px" width="16" height="16"><circle cx="8" cy="8" r="7" fill="#1a7fd6"/><path d="M8 7v5M8 4v2" stroke="#fff" stroke-width="1.800"/></svg>
<span class="a" style="left:601px;top:1039px;letter-spacing:-.27px">0 of 2 Messages</span>
<div class="sp" style="left:695px;top:1037px;height:20px"></div>
<div class="btn" style="left:700px;width:22px"></div>
<svg class="a" style="left:703px;top:1039px" width="16" height="16"><path d="M6 7h9l-3.500 4v4h-2v-4z" fill="#444"/><path d="M2 1l6 6M8 1L2 7" stroke="#a1260d" stroke-width="1.800"/></svg>
<div class="sp" style="left:726px;top:1037px;height:20px"></div>
<div class="cb" style="left:733px;top:1037px;width:151px;height:21px;line-height:20px">Build + IntelliSense</div><div class="dd" style="left:873px;top:1046px"></div>
<div style="left:1131px;top:1037px;width:200px;height:20px;background:#fff;border:1px solid #b9c3de;box-sizing:border-box"></div>
<span class="a" style="left:1136px;top:1039px;color:#717171;letter-spacing:-.35px">Search Error List</span>
<svg class="a" style="left:1302px;top:1039px" width="16" height="16"><use href="#mag"/></svg>
<svg class="a" style="left:1320px;top:1045px" width="8" height="5"><path d="M1 0h6L4 3z" fill="#777"/></svg>
<div style="left:234px;top:1060px;width:1097px;height:74px;background:#fff"></div>
<div style="left:234px;top:1060px;width:1097px;height:21px;background:#f5f5f5;border-bottom:1px solid #ccced8;box-sizing:border-box"></div>
<div style="left:261px;top:1060px;width:1px;height:20px;background:#ccced8"></div>
<div style="left:287px;top:1060px;width:1px;height:20px;background:#ccced8"></div>
<div style="left:972px;top:1060px;width:1px;height:20px;background:#ccced8"></div>
<div style="left:1122px;top:1060px;width:1px;height:20px;background:#ccced8"></div>
<div style="left:1272px;top:1060px;width:1px;height:20px;background:#ccced8"></div>
<div style="left:1306px;top:1060px;width:1px;height:20px;background:#ccced8"></div>
<div style="left:1330px;top:1060px;width:1px;height:20px;background:#ccced8"></div>
<svg class="a" style="left:276px;top:1062px" width="9" height="9"><path d="M1 1h7v1H6v5H5V2H3v3H1z" fill="#666"/></svg>
<span class="a" style="left:291px;top:1063px">Description</span>
<span class="a" style="left:975px;top:1063px">Project</span>
<span class="a" style="left:1125px;top:1063px">File</span>
<span class="a" style="left:1275px;top:1063px">Line</span>

<!-- Solution Explorer -->
<div class="hd" style="left:1339px;top:41px;width:115px;height:20px"></div>
<span class="a" style="left:1343px;top:43px;color:#f2f4fa">Solution Explorer</span>
<div style="left:1339px;top:61px;width:115px;height:29px;background:#ccd5f0"></div>
<svg class="a" style="left:1345px;top:64px" width="109" height="22" viewBox="1345 64 109 22">
<circle cx="1354" cy="75" r="6" fill="#a8adb8"/><path d="M1357 75h-6M1354 72.500l-2.500 2.500 2.500 2.500" stroke="#ccd5f0" fill="none" stroke-width="1.300"/>
<circle cx="1376" cy="75" r="6" fill="#a8adb8"/><path d="M1373 75h6M1376 72.500l2.500 2.500-2.500 2.500" stroke="#ccd5f0" fill="none" stroke-width="1.300"/>
<path d="M1391 75l7-6.500 7 6.500M1393 74v7.500h4v-4h2v4h4V74" fill="none" stroke="#222" stroke-width="1.300"/>
<rect x="1414" y="72.500" width="12" height="8" fill="none" stroke="#222" stroke-width="1.200"/><rect x="1419" y="68" width="8" height="5" fill="#dcb67a"/><path d="M1415 70h3M1424 83h3" stroke="#1e5ea8" stroke-width="1.200"/>
<path d="M1435 74h6l-3 3z" fill="#333"/><path d="M1448 66v20" stroke="#a3afd1"/>
</svg>
<div style="left:1339px;top:90px;width:115px;height:21px;background:#fff;border-bottom:1px solid #c5cde0;box-sizing:border-box"></div>
<span class="a" style="left:1344px;top:92px;color:#717171">Search Solution Explorer</span>
<div style="left:1339px;top:110px;width:115px;height:552px;background:#f7f9fe;overflow:hidden"></div>
<div style="left:1339px;top:131px;width:115px;height:18px;background:#e6e7ef"></div>
<div class="t" style="top:113px"><svg style="left:13px"><path d="M1 1h13v11H6" fill="none" stroke="#333"/><path d="M1 1v3h13" fill="none" stroke="#333"/><path d="M1 9l5 3-5 3-1-1z" fill="#7d3fb8"/></svg><span style="left:33px">Solution 'Xamarin</span></div>
<div class="t" style="top:131px"><svg style="left:30px"><rect x="3.500" y="1.500" width="9" height="13" fill="#fff" stroke="#333"/><rect x="6" y="4" width="4" height="5" fill="#333"/></svg><span style="left:51px;font-weight:bold">XamatinTutorial</span></div>
<div class="t" style="top:149px"><svg style="left:48px"><path d="M3 10a3 3 0 0 1 1-5c1-4 6-4 7-1 4 0 4 6 1 6zM8 9v5M6 11h4" fill="none" stroke="#444"/></svg><span style="left:69px">Connected</span></div>
<div class="t" style="top:167px"><svg style="left:48px"><path d="M2 14l7-7c-1-3 1-5 4-5l-2 3 2 2 2-2c0 4-2 5-5 5l-6 6z" fill="#333"/></svg><span style="left:69px">Properties</span></div>
<div class="t" style="top:185px"><svg style="left:48px"><use href="#refs"/></svg><span style="left:69px">References</span></div>
<div class="t" style="top:203px"><svg style="left:66px"><path d="M3 3h10M5 6h8" stroke="#333" stroke-width="1.500"/><circle cx="6" cy="11" r="3.500" fill="#333"/></svg><span style="left:87px">Analyzers</span></div>
<div class="t" style="top:221px"><svg style="left:66px"><use href="#refs"/></svg><span style="left:87px">Mono.Android</span></div>
<div class="t" style="top:239px"><svg style="left:66px"><use href="#refs"/></svg><span style="left:87px">System</span></div>
<div class="t" style="top:257px"><svg style="left:66px"><use href="#refs"/></svg><span style="left:87px">System</span></div>
<div class="t" style="top:275px"><svg style="left:66px"><use href="#refs"/></svg><span style="left:87px">System</span></div>
<div class="t" style="top:293px"><svg style="left:66px"><use href="#refs"/></svg><span style="left:87px">System</span></div>
<div class="t" style="top:311px"><svg style="left:66px"><use href="#refs"/></svg><span style="left:87px">System</span></div>
<div class="t" style="top:329px"><svg style="left:66px"><use href="#xam"/></svg><span style="left:87px">Xamarin</span></div>
<div class="t" style="top:347px"><svg style="left:66px"><use href="#xam"/></svg><span style="left:87px">Xamarin</span></div>
<div class="t" style="top:365px"><svg style="left:66px"><use href="#xam"/></svg><span style="left:87px">Xamarin</span></div>
<div class="t" style="top:383px"><svg style="left:66px"><use href="#xam"/></svg><span style="left:87px">Xamarin</span></div>
<div class="t" style="top:401px"><svg style="left:48px"><use href="#fld"/></svg><span style="left:69px">Assets</span></div>
<div class="t" style="top:419px"><svg style="left:48px"><use href="#fo"/></svg><span style="left:69px">Resources</span></div>
<div class="t" style="top:437px"><svg style="left:66px"><use href="#fld"/></svg><span style="left:87px">drawable</span></div>
<div class="t" style="top:455px"><svg style="left:66px"><use href="#fo"/></svg><span style="left:87px">layout</span></div>
<div class="t" style="top:473px"><svg style="left:84px"><path d="M6 2h5l3 3v10H9M6 2v7" fill="none" stroke="#444"/><rect x="4" y="10" width="5" height="4" fill="#444"/></svg><span style="left:105px">activity</span></div>
<div class="t" style="top:491px"><svg style="left:66px"><use href="#fld"/></svg><span style="left:87px">mipmap</span></div>
<div class="t" style="top:509px"><svg style="left:66px"><use href="#fld"/></svg><span style="left:87px">mipmap</span></div>
<div class="t" style="top:527px"><svg style="left:66px"><use href="#fld"/></svg><span style="left:87px">mipmap</span></div>
<div class="t" style="top:545px"><svg style="left:66px"><use href="#fld"/></svg><span style="left:87px">mipmap</span></div>
<div class="t" style="top:563px"><svg style="left:66px"><use href="#fld"/></svg><span style="left:87px">mipmap</span></div>
<div class="t" style="top:581px"><svg style="left:66px"><use href="#fld"/></svg><span style="left:87px">mipmap</span></div>
<div class="t" style="top:599px"><svg style="left:66px"><use href="#fld"/></svg><span style="left:87px">values</span></div>
<div class="t" style="top:617px"><svg style="left:66px"><path d="M3 1.500h7l3 3v10H3zM5 6h6M5 8.500h6M5 11h6" fill="#fff" stroke="#444"/></svg><span style="left:87px">About</span></div>
<div class="t" style="top:635px"><span style="left:68px;font-size:10px;font-weight:bold;color:#444">C#</span><span style="left:87px">Resource</span></div>
<div class="t" style="top:653px;height:9px"><span style="left:50px;font-size:10px;font-weight:bold;color:#444">C#</span><span style="left:69px">MainActivity</span></div>
<svg class="a" style="left:1349px;top:135px" width="10" height="10"><path d="M8 1v8H0z" fill="#222"/></svg>
<svg class="a" style="left:1367px;top:171px" width="8" height="10"><use href="#arO"/></svg>
<svg class="a" style="left:1367px;top:189px" width="10" height="10"><path d="M8 1v8H0z" fill="#222"/></svg>
<svg class="a" style="left:1367px;top:405px" width="8" height="10"><use href="#arO"/></svg>
<svg class="a" style="left:1367px;top:423px" width="10" height="10"><path d="M8 1v8H0z" fill="#222"/></svg>
<svg class="a" style="left:1385px;top:459px" width="10" height="10"><path d="M8 1v8H0z" fill="#222"/></svg>
<svg class="a" style="left:1385px;top:495px" width="8" height="10"><use href="#arO"/></svg>
<svg class="a" style="left:1385px;top:513px" width="8" height="10"><use href="#arO"/></svg>
<svg class="a" style="left:1385px;top:531px" width="8" height="10"><use href="#arO"/></svg>
<svg class="a" style="left:1385px;top:549px" width="8" height="10"><use href="#arO"/></svg>
<svg class="a" style="left:1385px;top:567px" width="8" height="10"><use href="#arO"/></svg>
<svg class="a" style="left:1385px;top:585px" width="8" height="10"><use href="#arO"/></svg>
<svg class="a" style="left:1385px;top:603px" width="8" height="10"><use href="#arO"/></svg>
<div style="left:1339px;top:662px;width:100px;height:20px;background:#f7f9fe"></div>
<span class="a" style="left:1344px;top:664px;letter-spacing:-.05px">Solution Explorer</span>
<div style="left:1441px;top:662px;width:13px;height:19px;background:#40568d;overflow:hidden"><span class="a w" style="left:4px;top:2px">Team</span></div>

<!-- Properties -->
<div style="left:1339px;top:691px;width:115px;height:443px;background:#f5f5f5"></div>
<div class="hd" style="left:1339px;top:691px;width:115px;height:20px"></div>
<span class="a" style="left:1343px;top:693px;color:#f2f4fa;letter-spacing:-.2px">Properties</span>
<span class="a" style="left:1353px;top:719px">Type</span>
<div style="left:1343px;top:745px;width:112px;height:16px;background:#fff;border:1px solid #b9c3de;box-sizing:border-box"></div>
<div style="left:1339px;top:763px;width:115px;height:24px;background:#eeeeef"></div>
<span class="a" style="left:1347px;top:768px">Arrange By: Category</span>
</body></html>
